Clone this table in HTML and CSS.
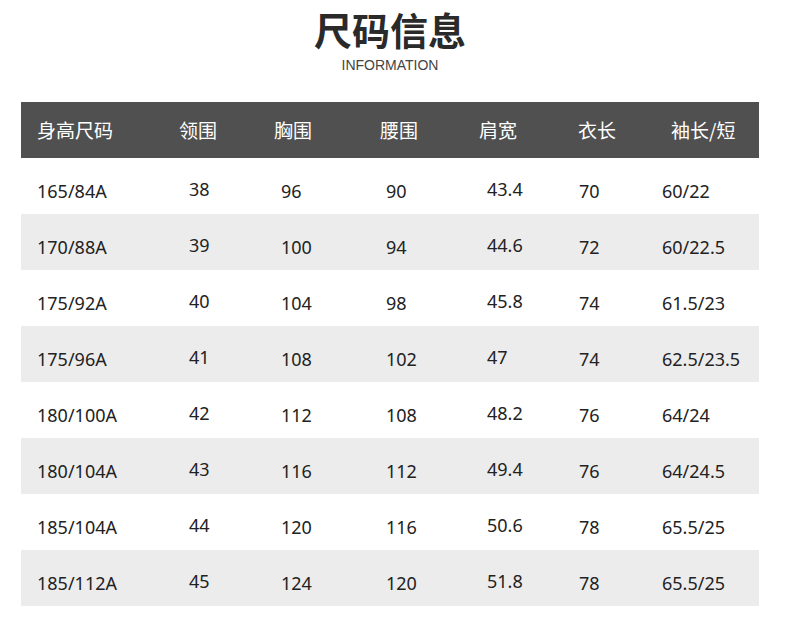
FILE: index.html
```html
<!DOCTYPE html>
<html lang="zh">
<head>
<meta charset="utf-8">
<link rel="stylesheet" href="styles.css">
</head>
<body>
<div class="page">
  <div class="title">尺码信息</div>
  <div class="subtitle">INFORMATION</div>
  <div class="table">
    <div class="row head">
      <div>身高尺码</div><div>领围</div><div>胸围</div><div>腰围</div><div>肩宽</div><div>衣长</div><div>袖长/短</div>
    </div>
    <div class="row">
      <div>165/84A</div><div>38</div><div>96</div><div>90</div><div>43.4</div><div>70</div><div>60/22</div>
    </div>
    <div class="row alt">
      <div>170/88A</div><div>39</div><div>100</div><div>94</div><div>44.6</div><div>72</div><div>60/22.5</div>
    </div>
    <div class="row">
      <div>175/92A</div><div>40</div><div>104</div><div>98</div><div>45.8</div><div>74</div><div>61.5/23</div>
    </div>
    <div class="row alt">
      <div>175/96A</div><div>41</div><div>108</div><div>102</div><div>47</div><div>74</div><div>62.5/23.5</div>
    </div>
    <div class="row">
      <div>180/100A</div><div>42</div><div>112</div><div>108</div><div>48.2</div><div>76</div><div>64/24</div>
    </div>
    <div class="row alt">
      <div>180/104A</div><div>43</div><div>116</div><div>112</div><div>49.4</div><div>76</div><div>64/24.5</div>
    </div>
    <div class="row">
      <div>185/104A</div><div>44</div><div>120</div><div>116</div><div>50.6</div><div>78</div><div>65.5/25</div>
    </div>
    <div class="row alt">
      <div>185/112A</div><div>45</div><div>124</div><div>120</div><div>51.8</div><div>78</div><div>65.5/25</div>
    </div>
  </div>
</div>
</body>
</html>
```

FILE: styles.css
```css
* { box-sizing: border-box; }
html, body { margin: 0; padding: 0; background: #ffffff; }
body {
  font-family: "Noto Sans", "Noto Sans CJK SC", sans-serif;
  color: #222;
}
.page {
  width: 780px;
  padding-top: 3px;
}
.title {
  text-align: center;
  font-family: "Noto Sans CJK SC", sans-serif;
  font-size: 38px;
  font-weight: 700;
  color: #2a2a2a;
  line-height: 52px;
}
.subtitle {
  text-align: center;
  font-family: "Liberation Sans", Arial, sans-serif;
  font-size: 14px;
  color: #444;
  line-height: 16px;
  margin-top: 2px;
}
.table {
  margin: 29px 0 0 21px;
  width: 738px;
}
.row {
  display: grid;
  grid-template-columns: 142px 95px 106px 99px 99px 84px 97px;
  padding-left: 16px;
  height: 56px;
  align-items: center;
  font-size: 18px;
  line-height: 24px;
  background: #ffffff;
}
.row > div { white-space: nowrap; padding-top: 9px; }
.row.alt { background: #ececec; }
.row.head {
  background: #505050;
  color: #ffffff;
  font-family: "Noto Sans CJK SC", sans-serif;
  font-size: 19px;
}
.row.head > div { padding-top: 0; }
.row.head > div:nth-child(7) { padding-left: 9px; }
.row:not(.head) > div:nth-child(2) { padding-left: 10px; padding-top: 5px; }
.row:not(.head) > div:nth-child(3) { padding-left: 7px; }
.row:not(.head) > div:nth-child(4) { padding-left: 6px; }
.row:not(.head) > div:nth-child(5) { padding-left: 8px; padding-top: 5px; }
.row:not(.head) > div:nth-child(6) { padding-left: 1px; padding-top: 10px; }
```
